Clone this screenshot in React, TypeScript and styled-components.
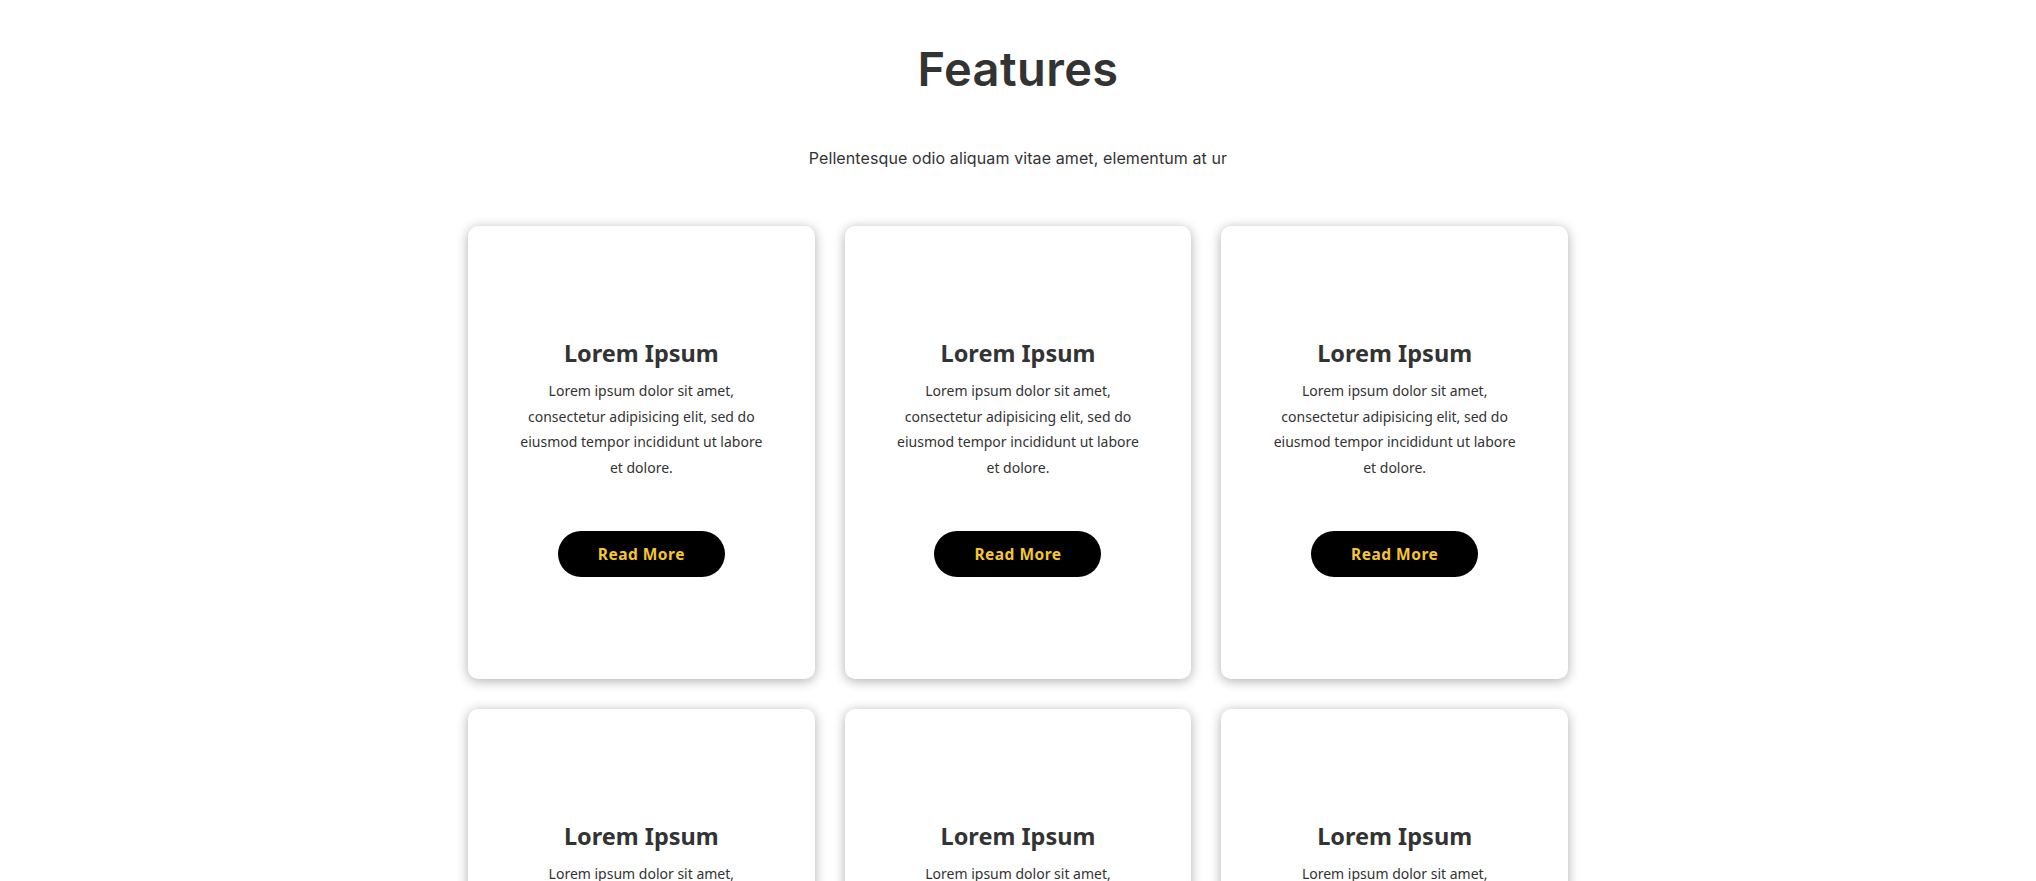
import React from "react";
import styled, { createGlobalStyle } from "styled-components";

const Global = createGlobalStyle`
  html, body { margin: 0; padding: 0; background: #fff; }
  * { box-sizing: border-box; }
`;

const Section = styled.section`
  display: flex;
  flex-direction: column;
  align-items: center;
  padding-top: 40px;
`;

const Title = styled.h1`
  margin: 0;
  font-family: "Inter", "Noto Sans", sans-serif;
  font-weight: 600;
  font-size: 47px;
  line-height: 58px;
  color: #333;
  letter-spacing: 0.4px;
`;

const Subtitle = styled.p`
  margin: 48px 0 0;
  font-family: "Inter", "Noto Sans", sans-serif;
  font-size: 16px;
  line-height: 24px;
  color: #333;
  letter-spacing: 0.1px;
`;

const Grid = styled.div`
  margin-top: 56px;
  width: 1100px;
  display: grid;
  grid-template-columns: repeat(3, 1fr);
  gap: 30px;
`;

const Card = styled.div`
  height: 453px;
  background: #fff;
  border-radius: 10px;
  box-shadow: 0 2px 12px rgba(0, 0, 0, 0.32);
  padding: 110px 48px 0;
  display: flex;
  flex-direction: column;
  align-items: center;
  text-align: center;
`;

const CardTitle = styled.h2`
  margin: 0 0 8px;
  font-family: "Noto Sans", "Open Sans", sans-serif;
  font-weight: 700;
  font-size: 23.5px;
  line-height: 34px;
  color: #333;
`;

const CardText = styled.p`
  margin: 0;
  font-family: "Noto Sans", "Open Sans", sans-serif;
  font-size: 14px;
  line-height: 25.5px;
  color: #333;
`;

const Button = styled.a`
  margin-top: 51px;
  width: 167px;
  height: 46px;
  border-radius: 23px;
  background: #000;
  color: #f6c530;
  display: flex;
  align-items: center;
  justify-content: center;
  font-family: "Noto Sans", "Open Sans", sans-serif;
  font-weight: 700;
  font-size: 15.5px;
  letter-spacing: 0.5px;
  text-decoration: none;
`;

const items = Array.from({ length: 6 });

export default function App() {
  return (
    <>
      <Global />
      <Section>
        <Title>Features</Title>
        <Subtitle>Pellentesque odio aliquam vitae amet, elementum at ur</Subtitle>
        <Grid>
          {items.map((_, i) => (
            <Card key={i}>
              <CardTitle>Lorem Ipsum</CardTitle>
              <CardText>
                Lorem ipsum dolor sit amet, consectetur adipisicing elit, sed do eiusmod tempor incididunt ut labore et dolore.
              </CardText>
              <Button href="#">Read More</Button>
            </Card>
          ))}
        </Grid>
      </Section>
    </>
  );
}
